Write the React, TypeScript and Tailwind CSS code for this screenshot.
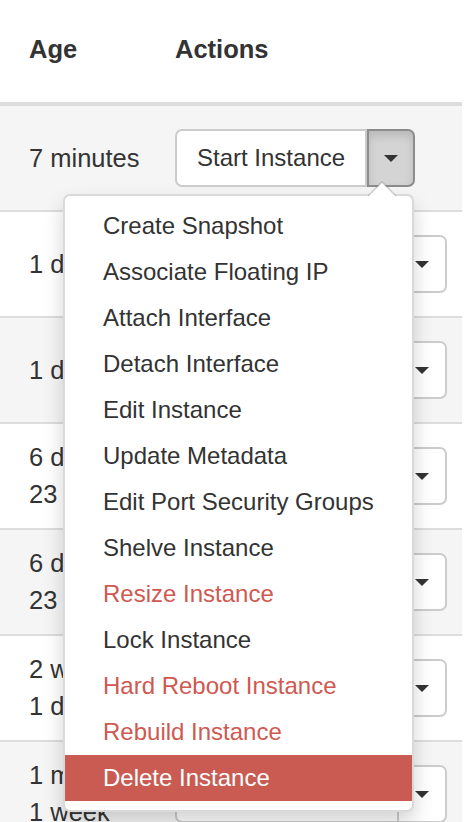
import React from 'react';

type Row = { age: string; action: string; open?: boolean };

const rows: Row[] = [
  { age: '7 minutes', action: 'Start Instance', open: true },
  { age: '1 day', action: 'Create Snapshot' },
  { age: '1 day', action: 'Create Snapshot' },
  { age: '6 days, 23 hours', action: 'Create Snapshot' },
  { age: '6 days, 23 hours', action: 'Create Snapshot' },
  { age: '2 weeks, 1 day', action: 'Create Snapshot' },
  { age: '1 month, 1 week', action: 'Create Snapshot' },
];

const menu: { label: string; danger?: boolean; active?: boolean }[] = [
  { label: 'Create Snapshot' },
  { label: 'Associate Floating IP' },
  { label: 'Attach Interface' },
  { label: 'Detach Interface' },
  { label: 'Edit Instance' },
  { label: 'Update Metadata' },
  { label: 'Edit Port Security Groups' },
  { label: 'Shelve Instance' },
  { label: 'Resize Instance', danger: true },
  { label: 'Lock Instance' },
  { label: 'Hard Reboot Instance', danger: true },
  { label: 'Rebuild Instance', danger: true },
  { label: 'Delete Instance', danger: true, active: true },
];

function Caret() {
  return <span className="h-0 w-0 border-x-[7px] border-t-[7px] border-x-transparent border-t-[#333]" />;
}

function SplitButton({ label, open }: { label: string; open?: boolean }) {
  return (
    <div className="flex h-[58px]">
      <button
        type="button"
        className="h-full rounded-l-[7px] border-2 border-[#ccc] bg-white px-[20px] text-[24px] text-[#333]"
      >
        {/* labels of the rows below are covered by the open menu */}
        <span className={open ? '' : 'invisible'}>{label}</span>
      </button>
      <button
        type="button"
        className={
          open
            ? 'flex h-full w-[48px] items-center justify-center rounded-r-[7px] border-2 border-[#8c8c8c] bg-[#d4d4d4] shadow-[inset_0_5px_9px_rgba(0,0,0,0.125)]'
            : 'flex h-full w-[48px] items-center justify-center rounded-r-[7px] border-2 border-l-0 border-[#ccc] bg-white'
        }
      >
        <Caret />
      </button>
    </div>
  );
}

export default function App() {
  return (
    <div className="relative h-[822px] w-[466px] overflow-hidden bg-white font-['Liberation_Sans',Arial,sans-serif] text-[#333]">
      <div className="w-[462px]">
        {/* Header */}
        <div className="flex h-[106px] items-center border-b-4 border-[#ddd] pb-[3px] text-[25.5px] font-bold">
          <div className="w-[175px] pl-[29px]">Age</div>
          <div>Actions</div>
        </div>

        {/* Rows */}
        {rows.map((r, i) => (
          <div
            key={i}
            className={
              (i % 2 === 0 ? 'bg-[#f5f5f5] ' : 'bg-white ') +
              (i === 0 ? 'h-[104px] ' : 'h-[106px] border-t-2 border-[#ddd] ') +
              'flex items-center'
            }
          >
            <div className="w-[175px] pl-[29px] pr-[31px] text-[25.5px] leading-[37px]">{r.age}</div>
            <SplitButton label={r.action} open={r.open} />
          </div>
        ))}
      </div>

      {/* Open dropdown */}
      <div className="absolute left-[63px] top-[194px] w-[351px] rounded-[7px] border-2 border-[rgba(0,0,0,0.15)] bg-white pb-[9px] pt-[7px] shadow-[0_10px_20px_rgba(0,0,0,0.175)]">
        <svg className="absolute -top-[15px] left-[303px]" width="28" height="16" viewBox="0 0 28 16">
          <polygon points="0,15 14,1 28,15" fill="white" />
          <polyline points="0,15 14,1 28,15" fill="none" stroke="rgba(0,0,0,0.18)" strokeWidth="1.5" />
        </svg>
        {menu.map((m) => (
          <div
            key={m.label}
            className={
              (m.active
                ? 'bg-[#c95b53] text-white '
                : m.danger
                  ? 'text-[#cf5951] '
                  : 'text-[#333] ') + 'flex h-[46px] items-center pl-[38px] text-[24px]'
            }
          >
            {m.label}
          </div>
        ))}
      </div>
    </div>
  );
}
